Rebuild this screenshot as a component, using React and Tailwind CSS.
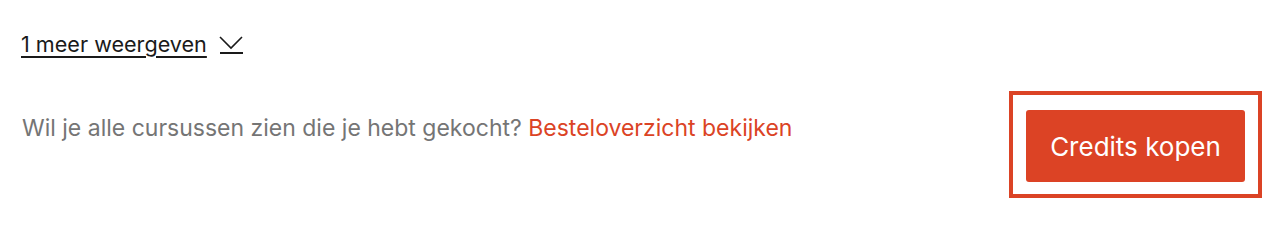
import React from 'react'

const ChevronDown = () => (
  <svg width="24" height="20" viewBox="0 0 24 20" fill="none" className="ml-3 shrink-0 mt-[2px]">
    <path d="M1 2l11 11L23 2" stroke="#1a1a1a" strokeWidth="1.6" />
    <path d="M1 18h23" stroke="#1a1a1a" strokeWidth="2" />
  </svg>
)

export default function App() {
  return (
    <div className="w-[1272px] h-[212px] bg-white font-['Inter',sans-serif] overflow-hidden">
      {/* Toon meer */}
      <div className="pl-[21px] pt-[32px]">
        <button className="flex items-center text-[#1a1a1a] text-[21.6px] leading-[24px]">
          <span className="underline underline-offset-[4px] decoration-[1.5px]">1 meer weergeven</span>
          <ChevronDown />
        </button>
      </div>

      {/* Footer row */}
      <div className="flex items-start justify-between pl-[22px] pr-[10px] mt-[35px]">
        <p className="mt-[23px] text-[23px] text-[#757575] leading-[28px]">
          Wil je alle cursussen zien die je hebt gekocht?{' '}
          <a className="text-[#db4325]">Besteloverzicht bekijken</a>
        </p>
        <div className="border-[4px] border-[#db4325] px-[13px] pt-[15px] pb-[12px]">
          <button className="w-[219px] h-[72px] bg-[#dc4325] rounded-[3px] text-white text-[26px]">
            Credits kopen
          </button>
        </div>
      </div>
    </div>
  )
}
